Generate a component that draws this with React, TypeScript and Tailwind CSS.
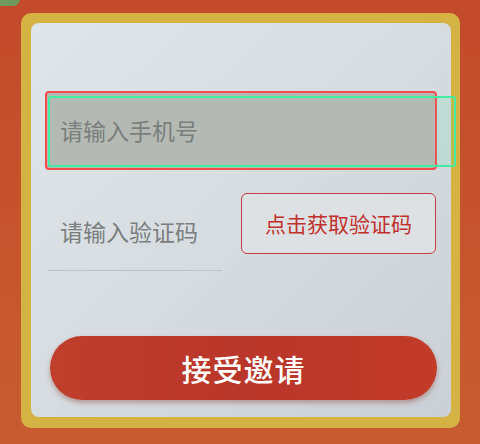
import React from 'react';

const cjk = { fontFamily: '"Noto Sans CJK SC", "Noto Sans", sans-serif' };

const App: React.FC = () => {
  return (
    <div
      className="relative w-[480px] h-[444px] overflow-hidden bg-gradient-to-b from-[#c34a2b] to-[#c85c30] pt-[13px] pl-[21px]"
      style={cjk}
    >
      {/* green blob peeking at the corner */}
      <div className="absolute -left-[6px] -top-[8px] w-[26px] h-[14px] rounded-full bg-[#6f9a5c]" />

      <div className="w-[439px] h-[415px] rounded-[10px] bg-[#d4b243] p-[10px]">
        <div className="w-[420px] h-[394px] rounded-[8px] bg-gradient-to-br from-[#e0e5e9] via-[#d7dce0] to-[#cbd0d6] pt-[68px] pl-[14px]">
          {/* phone input */}
          <div className="relative w-[392px] h-[79px] rounded-[4px] border-[2.5px] border-[#f24c4c] bg-[#b4b9b4] flex items-center pl-[13px]">
            <span className="text-[23px] text-[#7a7e7c]">请输入手机号</span>
            <div className="absolute left-[389px] top-[3px] w-[19px] h-[71px] bg-[#44eba2]/15" />
            <div className="absolute left-[1px] top-[3px] w-[408px] h-[71px] rounded-[3px] border-[2.5px] border-[#44eba2]" />
          </div>

          {/* code row */}
          <div className="flex items-start mt-[23px]">
            <div className="ml-[3px] w-[174px] h-[78px] border-b border-[#bfc3c6] flex items-center pl-[12px]">
              <span className="text-[23px] text-[#7a7e7e]">请输入验证码</span>
            </div>
            <button className="ml-[19px] w-[195px] h-[61px] rounded-[6px] border-[1.5px] border-[#c43d3f] bg-[#dde1e4] text-[21px] text-[#c1302b] flex items-center justify-center">
              点击获取验证码
            </button>
          </div>

          {/* accept */}
          <button className="mt-[65px] ml-[5px] w-[387px] h-[64px] rounded-full bg-gradient-to-r from-[#c03e2c] via-[#b9362a] to-[#c33b29] text-white text-[30px] font-medium tracking-[1px] flex items-center justify-center shadow-[0_3px_5px_rgba(120,40,20,0.35)]">
            接受邀请
          </button>
        </div>
      </div>
    </div>
  );
};

export default App;
